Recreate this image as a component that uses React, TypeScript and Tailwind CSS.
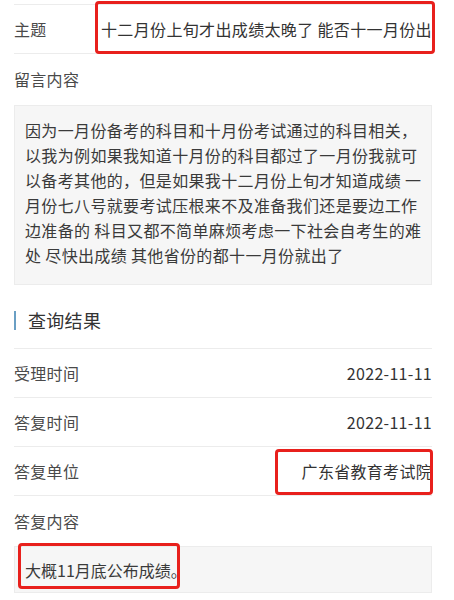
import React from "react";

const lines = [
  "因为一月份备考的科目和十月份考试通过的科目相关，",
  "以我为例如果我知道十月份的科目都过了一月份我就可",
  "以备考其他的，但是如果我十二月份上旬才知道成绩 一",
  "月份七八号就要考试压根来不及准备我们还是要边工作",
  "边准备的 科目又都不简单麻烦考虑一下社会自考生的难",
  "处 尽快出成绩 其他省份的都十一月份就出了",
];

function Row({ label, value }: { label: string; value: string }) {
  return (
    <div className="h-[49px] flex items-center justify-between border-b border-[#ececec]">
      <span className="text-[16px] text-[#4a4a4a] tracking-[0.3px]">{label}</span>
      <span className="text-[16px] text-[#333] tracking-[0.3px]">{value}</span>
    </div>
  );
}

export default function App() {
  return (
    <div className="relative w-[454px] h-[600px] overflow-hidden bg-white font-['Noto_Sans_CJK_SC','Noto_Sans',sans-serif]">
      <div className="ml-[14px] w-[418px]">
        <div className="mt-[4px] h-[50px] flex items-center border-t border-b border-[#ececec]">
          <span className="w-[87px] shrink-0 text-[16px] text-[#4a4a4a] tracking-[0.3px]">主题</span>
          <span className="text-[16px] text-[#333] whitespace-nowrap tracking-[0.35px]">十二月份上旬才出成绩太晚了 能否十一月份出</span>
        </div>
        <div className="h-[50px] flex items-center">
          <span className="text-[16px] text-[#4a4a4a] tracking-[0.3px]">留言内容</span>
        </div>
        <div className="mt-px bg-[#f6f6f6] border border-[#ececec] pl-[10px] pr-[4px] pt-[12px] pb-[16px]">
          {lines.map((l, i) => (
            <div key={i} className="h-[25px] leading-[25px] text-[16px] text-[#3a3a3a] whitespace-pre tracking-[0.35px]">
              {l}
            </div>
          ))}
        </div>
        <div className="h-[64px] pt-[8px] flex items-center border-b border-[#ececec]">
          <div className="w-[2px] h-[19px] bg-[#6a9fc4]" />
          <span className="ml-[12px] text-[18px] text-[#333] tracking-[0.3px]">查询结果</span>
        </div>
        <Row label="受理时间" value="2022-11-11" />
        <Row label="答复时间" value="2022-11-11" />
        <Row label="答复单位" value="广东省教育考试院" />
        <div className="h-[50px] flex items-center">
          <span className="text-[16px] text-[#4a4a4a] tracking-[0.3px]">答复内容</span>
        </div>
        <div className="h-[47px] flex items-center bg-[#f6f6f6] border border-[#ececec] pl-[10px]">
          <span className="text-[16px] text-[#3a3a3a]">大概11月底公布成绩。</span>
        </div>
      </div>

      <div className="absolute left-[95px] top-[1px] w-[340px] h-[53px] border-[3px] border-[#e8201c] rounded-[4px]" />
      <div className="absolute left-[275px] top-[449px] w-[158px] h-[46px] border-[3px] border-[#e8201c] rounded-[4px]" />
      <div className="absolute left-[18px] top-[543px] w-[162px] h-[46px] border-[3px] border-[#e8201c] rounded-[4px]" />
    </div>
  );
}
